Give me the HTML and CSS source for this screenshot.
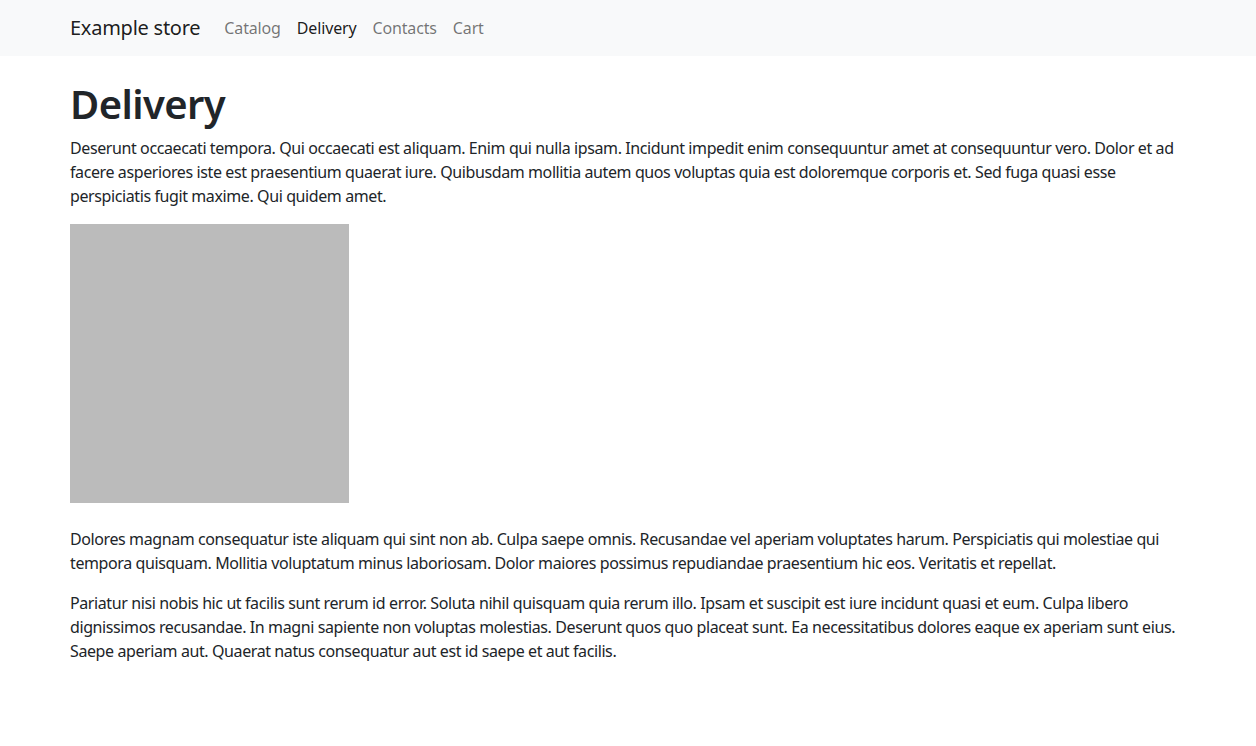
FILE: index.html
```html
<!DOCTYPE html>
<html lang="en">
<head>
<meta charset="utf-8">
<title>Delivery - Example store</title>
<link rel="stylesheet" href="styles.css">
</head>
<body>
<nav class="navbar">
  <div class="container nav-inner">
    <a class="brand" href="#">Example store</a>
    <ul class="nav-links">
      <li><a class="nav-link" href="#">Catalog</a></li>
      <li><a class="nav-link active" href="#">Delivery</a></li>
      <li><a class="nav-link" href="#">Contacts</a></li>
      <li><a class="nav-link" href="#">Cart</a></li>
    </ul>
  </div>
</nav>
<main class="container main">
  <h1 class="title">Delivery</h1>
  <p class="text">Deserunt occaecati tempora. Qui occaecati est aliquam. Enim qui nulla ipsam. Incidunt impedit enim consequuntur amet at consequuntur vero. Dolor et ad facere asperiores iste est praesentium quaerat iure. Quibusdam mollitia autem quos voluptas quia est doloremque corporis et. Sed fuga quasi esse perspiciatis fugit maxime. Qui quidem amet.</p>
  <div class="picture"></div>
  <p class="text">Dolores magnam consequatur iste aliquam qui sint non ab. Culpa saepe omnis. Recusandae vel aperiam voluptates harum. Perspiciatis qui molestiae qui tempora quisquam. Mollitia voluptatum minus laboriosam. Dolor maiores possimus repudiandae praesentium hic eos. Veritatis et repellat.</p>
  <p class="text">Pariatur nisi nobis hic ut facilis sunt rerum id error. Soluta nihil quisquam quia rerum illo. Ipsam et suscipit est iure incidunt quasi et eum. Culpa libero dignissimos recusandae. In magni sapiente non voluptas molestias. Deserunt quos quo placeat sunt. Ea necessitatibus dolores eaque ex aperiam sunt eius. Saepe aperiam aut. Quaerat natus consequatur aut est id saepe et aut facilis.</p>
</main>
</body>
</html>
```
FILE: styles.css
```css
* { box-sizing: border-box; }
html, body { margin: 0; padding: 0; }
body {
  font-family: "Noto Sans", "DejaVu Sans", sans-serif;
  font-size: 16px;
  line-height: 24px;
  color: #212529;
  background: #fff;
}
.container {
  width: 1140px;
  margin: 0 auto;
  padding: 0 12px;
}
.navbar {
  background: #f8f9fa;
  height: 56px;
}
.nav-inner {
  display: flex;
  align-items: center;
  height: 56px;
}
.brand {
  font-size: 20px;
  line-height: 30px;
  letter-spacing: -0.25px;
  color: rgba(0,0,0,.9);
  text-decoration: none;
  margin-right: 16px;
}
.nav-links {
  display: flex;
  list-style: none;
  margin: 0;
  padding: 0;
}
.nav-link {
  display: block;
  padding: 8px;
  letter-spacing: -0.15px;
  color: rgba(0,0,0,.55);
  text-decoration: none;
}
.nav-link.active { color: rgba(0,0,0,.9); }
.main { padding-top: 24px; }
.title {
  font-size: 40px;
  line-height: 48px;
  font-weight: 600;
  letter-spacing: -0.6px;
  margin: 0 0 8px;
}
.text {
  margin: 0 0 16px;
  letter-spacing: -0.4px;
}
.picture {
  width: 279px;
  height: 279px;
  background: #bbbbbb;
  margin-bottom: 24px;
}
```
